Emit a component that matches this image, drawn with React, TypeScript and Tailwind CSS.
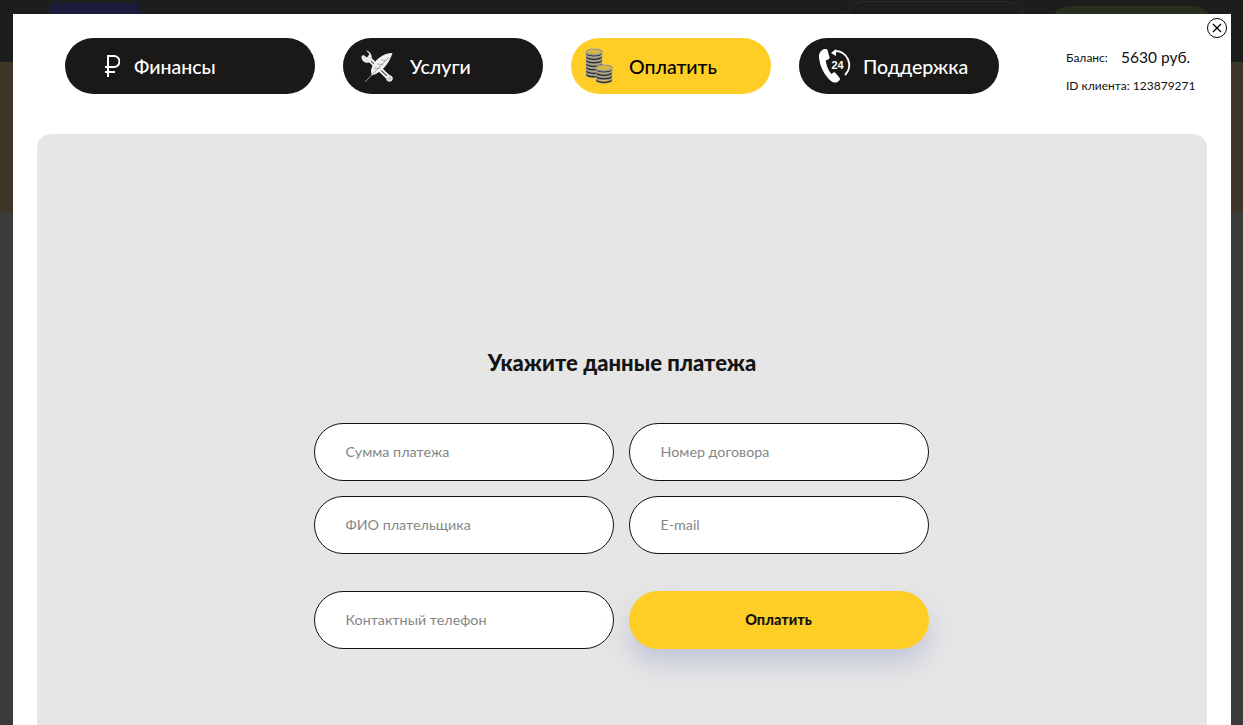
const font = "font-['Lato','Noto_Sans',sans-serif]";

function Ruble() {
  return (
    <svg width="16" height="24" viewBox="0 0 16 24" fill="none" stroke="#fff" strokeWidth="2">
      <path d="M4 23V2h6a5.500 5.500 0 0 1 0 11H1" />
      <path d="M1 18h10" />
    </svg>
  );
}

function Tools() {
  return (
    <svg width="34" height="34" viewBox="0 0 34 34" fill="none">
      <path d="M8 9l21 20" stroke="#fff" strokeWidth="4.500" />
      <path d="M11 12l16 15" stroke="#555" strokeWidth="1.200" />
      <path d="M6 1.500L9.500 5 7 8.500 3.500 6 1.500 7c-.5 4 3 8 7.500 6.500l2.500-2.500C13 6.500 10 2 6 1.500z" fill="#e8e8e8" />
      <circle cx="29.500" cy="29.500" r="2.800" fill="#ccc" stroke="#fff" />
      <path d="M32.500 4C24 4 14 10 11 21l.500 5.500C20 24.500 29 16 32.500 4z" fill="#f2f2f2" />
      <path d="M29 8L5 33" stroke="#999" strokeWidth="1" />
      <path d="M14 19l6 .500M17 15l6 .500M21 11l5 .500" stroke="#999" strokeWidth=".8" />
    </svg>
  );
}

function Coins() {
  const stack = (cx: number, ys: number[]) =>
    ys.map((y) => (
      <path
        key={`${cx}-${y}`}
        d={`M${cx - 8} ${y}v2c0 1.600 3.600 2.800 8 2.800s8-1.200 8-2.800v-2c0 1.600-3.600 2.800-8 2.800s-8-1.200-8-2.800z`}
        fill="#1c1c1c"
        stroke="#aaa"
        strokeWidth=".7"
      />
    ));
  return (
    <svg width="30" height="36" viewBox="0 0 30 36" fill="none">
      <path d="M1 4h16v24H1z" fill="#b4a772" />
      {stack(9, [25, 21.500, 18, 14.500, 11, 7.500, 4])}
      <ellipse cx="9" cy="4" rx="8" ry="2.800" fill="#d8b93a" stroke="#999" strokeWidth="1.300" />
      <path d="M11 22h16v10H11z" fill="#b4a772" />
      {stack(19, [30.500, 27, 23.500, 20])}
      <ellipse cx="19" cy="20" rx="8" ry="2.800" fill="#d8b93a" stroke="#999" strokeWidth="1.300" />
    </svg>
  );
}

function Phone24() {
  return (
    <svg width="38" height="38" viewBox="0 0 38 38" fill="none">
      <path d="M6 2.500C3 4 1.500 7 2 11c1 9 6 18 12 23 2 1.800 5 2 6.500 1l2-1.800c.600-.600.600-1.500.100-2.200l-4-5c-.600-.700-1.500-.900-2.200-.400l-2 1.300c-3-3.500-5.500-9.500-5.500-13.500l2.600-1.200c.800-.400 1.200-1.200 1-2L10.500 3C10.200 2 7.500 1.800 6 2.500z" fill="#fff" />
      <path d="M18 4a14 14 0 0 1 10 24" stroke="#fff" strokeWidth="2" />
      <path d="M14 6l5-4v7z" fill="#fff" />
      <text x="20.500" y="22" textAnchor="middle" fill="#fff" fontSize="11" fontWeight="700" fontFamily="Liberation Sans, sans-serif">24</text>
    </svg>
  );
}

function NavPill({ icon, label, width, iconBox, active }: { icon: React.ReactNode; label: string; width: string; iconBox: string; active?: boolean }) {
  return (
    <div className={`flex h-14 items-center rounded-[28px] ${width} ${active ? "bg-[#ffce26] text-black" : "bg-[#1a1917] text-white"}`}>
      <div className={`flex shrink-0 items-center justify-center ${iconBox}`}>{icon}</div>
      <span className="pt-0.5 text-[19.500px] font-medium leading-none">{label}</span>
    </div>
  );
}

function Field({ label }: { label: string }) {
  return (
    <div className="flex h-[58px] w-[300px] items-center rounded-[29px] border border-[#111] bg-white pb-px pl-[31px] text-[14.300px] text-[#868686]">
      {label}
    </div>
  );
}

export default function App() {
  return (
    <div className={`relative flex h-[725px] w-[1243px] flex-col overflow-hidden bg-[#3b3b3b] ${font}`}>
      <div className="flex h-[62px] shrink-0 items-start bg-[#1d1d1d]">
        <div className="ml-[50px] mt-[3px] h-[12px] w-[90px] rounded-sm bg-[#1b1c3c]" />
        <div className="ml-[705px] mt-px h-[40px] w-[180px] rounded-[20px] border border-[#2c2c2c]" />
        <div className="ml-[25px] mt-[6px] h-[40px] w-[163px] rounded-[20px] bg-[#262f20]" />
      </div>
      <div className="h-[150px] shrink-0 bg-[#3d3525]" />
      <div className="flex-1 bg-[#3b3b3b]" />

      <div className="absolute bottom-0 left-[13px] right-3 top-[14px] flex flex-col bg-white">
        <div className="flex h-[120px] shrink-0 items-start pl-[52px] pt-6">
          <div className="flex gap-7">
            <NavPill icon={<Ruble />} label="Финансы" width="w-[250px]" iconBox="ml-[39px] w-4 mr-[14px]" />
            <NavPill icon={<Tools />} label="Услуги" width="w-[200px]" iconBox="ml-[17px] w-[34px] mr-4" />
            <NavPill icon={<Coins />} label="Оплатить" width="w-[200px]" iconBox="ml-[14px] w-[30px] mr-[14px]" active />
            <NavPill icon={<Phone24 />} label="Поддержка" width="w-[200px]" iconBox="ml-[18px] w-[38px] mr-2" />
          </div>
          <div className="ml-[67px] flex flex-col text-[#111]">
            <div className="mt-[9px] flex h-[22px] items-center">
              <span className="w-[55px] text-[12px]">Баланс:</span>
              <span className="text-[15.500px]">5630 руб.</span>
            </div>
            <div className="mt-[6px] text-[12px] leading-[22px]">ID клиента: 123879271</div>
          </div>
        </div>

        <div className="ml-6 mr-6 flex flex-1 flex-col items-center rounded-t-[14px] bg-[#e6e6e6] pt-[214px]">
          <h1 className="text-[22px] font-black leading-[30px] text-[#141414]">Укажите данные платежа</h1>
          <div className="mr-[2px] mt-[45px] grid grid-cols-[300px_300px] gap-x-[15px] gap-y-[15px]">
            <Field label="Сумма платежа" />
            <Field label="Номер договора" />
            <Field label="ФИО плательщика" />
            <Field label="E-mail" />
            <div className="mt-[22px]">
              <Field label="Контактный телефон" />
            </div>
            <div className="mt-[22px] flex h-[58px] items-center justify-center rounded-[29px] bg-[#ffce26] text-[14.500px] font-black text-[#111] shadow-[0_14px_24px_rgba(150,160,200,0.45)]">
              Оплатить
            </div>
          </div>
        </div>
      </div>

      <div className="absolute left-[1207px] top-[18px] flex h-5 w-5 items-center justify-center rounded-full border-[1.500px] border-black bg-white">
        <svg width="10" height="10" viewBox="0 0 10 10" stroke="#000" strokeWidth="1.300">
          <path d="M1 1l8 8M9 1l-8 8" />
        </svg>
      </div>
    </div>
  );
}
